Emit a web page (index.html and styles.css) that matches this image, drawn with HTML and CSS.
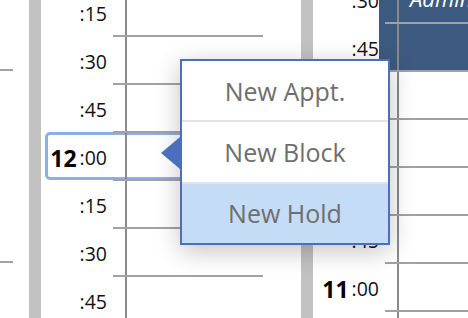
FILE: index.html
```html
<!DOCTYPE html>
<html>
<head>
<meta charset="utf-8">
<link rel="stylesheet" href="styles.css">
</head>
<body>
<div class="cal">
  <div class="edge">
    <div class="edge-slots">
      <div class="edge-slot"></div>
      <div class="edge-slot mark"><div class="tick"></div></div>
      <div class="edge-slot"></div>
      <div class="edge-slot"></div>
      <div class="edge-slot"></div>
      <div class="edge-slot mark"><div class="tick"></div></div>
      <div class="edge-slot"></div>
    </div>
  </div>

  <div class="day day-a">
    <div class="bar"></div>
    <div class="slots">
      <div class="slot"><div class="time">:15</div><div class="cell"><div class="vline"></div></div></div>
      <div class="slot"><div class="time">:30</div><div class="cell"><div class="vline"></div></div></div>
      <div class="slot"><div class="time">:45</div><div class="cell"><div class="vline"></div></div></div>
      <div class="slot"><div class="time"><b class="hour">12</b>:00</div><div class="cell"><div class="vline"></div></div></div>
      <div class="slot"><div class="time">:15</div><div class="cell"><div class="vline"></div></div></div>
      <div class="slot"><div class="time">:30</div><div class="cell"><div class="vline"></div></div></div>
      <div class="slot"><div class="time">:45</div><div class="cell"><div class="vline"></div></div></div>
    </div>
  </div>

  <div class="day day-b">
    <div class="bar"></div>
    <div class="slots">
      <div class="slot"><div class="time">:30</div><div class="cell"><div class="vline"></div></div></div>
      <div class="slot"><div class="time">:45</div><div class="cell"><div class="vline"></div></div></div>
      <div class="slot"><div class="time"></div><div class="cell"><div class="vline"></div></div></div>
      <div class="slot"><div class="time"></div><div class="cell"><div class="vline"></div></div></div>
      <div class="slot"><div class="time"></div><div class="cell"><div class="vline"></div></div></div>
      <div class="slot"><div class="time">:45</div><div class="cell"><div class="vline"></div></div></div>
      <div class="slot"><div class="time"><b class="hour">11</b>:00</div><div class="cell"><div class="vline"></div></div></div>
      <div class="slot"><div class="time"></div><div class="cell"><div class="vline"></div></div></div>
    </div>
  </div>

  <div class="appt"><span class="appt-title">Admin Time</span></div>

  <div class="selected"></div>

  <div class="menu">
    <div class="arrow"></div>
    <div class="item">New Appt.</div>
    <div class="item">New Block</div>
    <div class="item active">New Hold</div>
  </div>
</div>
</body>
</html>
```

FILE: styles.css
```css
* { box-sizing: border-box; }

html, body {
  margin: 0;
  padding: 0;
  background: #ffffff;
}

body {
  width: 468px;
  height: 318px;
  overflow: hidden;
  font-family: "Open Sans", "Noto Sans", sans-serif;
}

.cal {
  position: relative;
  display: flex;
  width: 468px;
  height: 318px;
  overflow: hidden;
}

/* left edge, tail of previous column */
.edge {
  width: 29px;
  flex: none;
}

.edge-slots {
  display: flex;
  flex-direction: column;
  margin-top: -25px;
}

.edge-slot {
  height: 48px;
  flex: none;
}

.edge-slot .tick {
  width: 13px;
  height: 100%;
  border-bottom: 2px solid #a3a1a3;
}

/* day columns */
.day {
  display: flex;
  flex: none;
  height: 318px;
}

.day-a { width: 272px; }
.day-b { flex: 1; }

.bar {
  width: 12px;
  flex: none;
  height: 100%;
  background: #c2c2c2;
}

.slots {
  display: flex;
  flex-direction: column;
  flex: 1;
}

.day-a .slots { margin-top: -11px; }
.day-b .slots { margin-top: -24px; }

.slot {
  display: flex;
  height: 48px;
  flex: none;
}

.time {
  width: 72px;
  flex: none;
  display: flex;
  align-items: flex-end;
  justify-content: flex-end;
  padding-right: 6px;
  padding-bottom: 11px;
  font-size: 19.5px;
  line-height: 24px;
  color: #111111;
  white-space: nowrap;
}

.time .hour {
  font-weight: 700;
  font-size: 23px;
  color: #000000;
  margin-right: 3px;
}

.cell {
  position: relative;
  z-index: 1;
  height: 100%;
  border-bottom: 2px solid #a3a1a3;
}

.day-a .cell { width: 150px; flex: none; }
.day-b .cell { flex: 1; }

.vline {
  margin-left: 12px;
  width: 2px;
  height: 100%;
  background: #8a8a8a;
}

/* appointment block in right column */
.appt {
  position: absolute;
  left: 379px;
  top: 0;
  width: 89px;
  height: 70px;
  background: #3d5a80;
  overflow: hidden;
  white-space: nowrap;
}

.appt-title {
  display: block;
  margin-top: -13px;
  padding-left: 31px;
  font-style: italic;
  font-size: 22px;
  line-height: 22px;
  color: #ffffff;
}

/* selected 12:00 slot */
.selected {
  position: absolute;
  left: 45px;
  top: 132px;
  width: 140px;
  height: 48px;
  border: 3px solid #8eafe4;
  border-radius: 5px;
}

/* context menu */
.menu {
  position: absolute;
  z-index: 5;
  left: 180px;
  top: 59px;
  width: 210px;
  height: 186px;
  display: flex;
  flex-direction: column;
  background: #ffffff;
  border: 2px solid #4a6fbf;
  box-shadow: 0 6px 24px rgba(0, 0, 0, 0.24);
}

.arrow {
  position: absolute;
  left: -21px;
  top: 76px;
  width: 0;
  height: 0;
  border-top: 16px solid transparent;
  border-bottom: 16px solid transparent;
  border-right: 19px solid #4a6fbf;
}

.item {
  flex: 1;
  display: flex;
  align-items: center;
  justify-content: center;
  font-size: 25px;
  color: #6e6e6e;
}

.item + .item {
  border-top: 2px solid #e3e3e3;
}

.item.active {
  background: #c4dcf5;
}
```
